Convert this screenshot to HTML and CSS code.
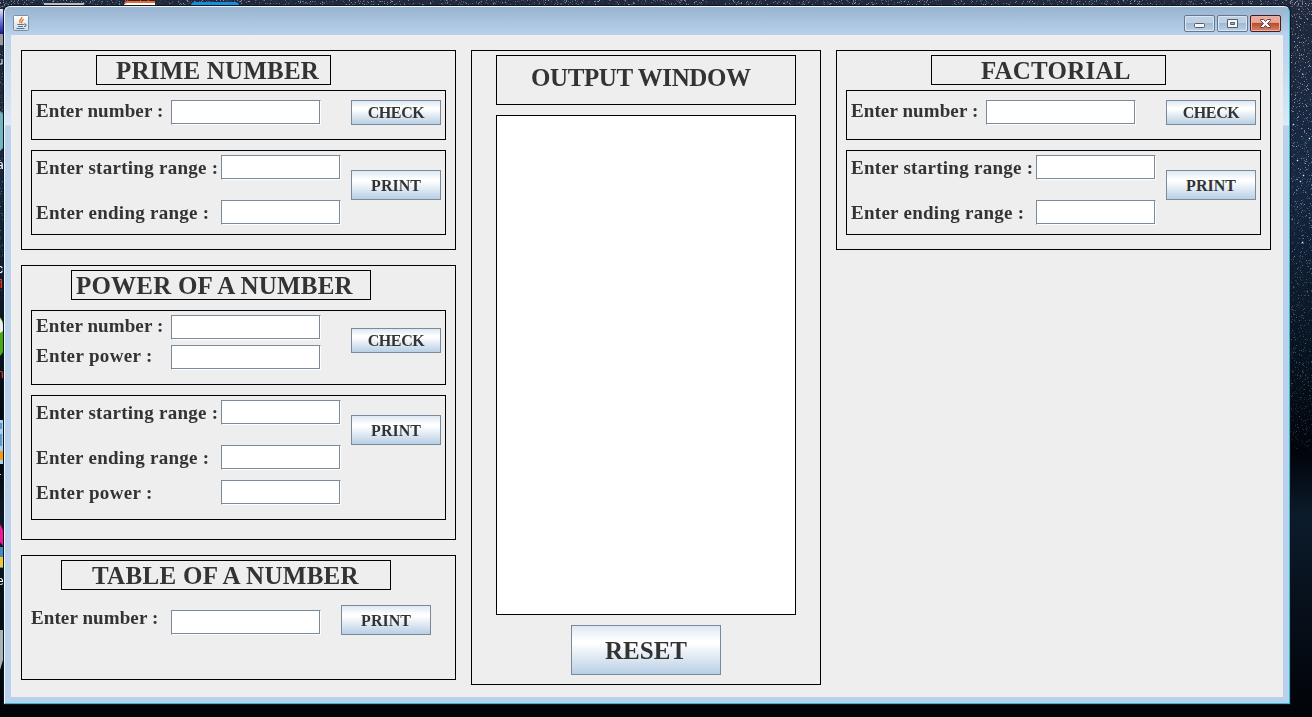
FILE: index.html
```html
<!DOCTYPE html>
<html lang="en">
<head>
<meta charset="utf-8">
<title>Number Tools</title>
<link rel="stylesheet" href="styles.css">
</head>
<body>
<canvas class="stars" width="1312" height="717"></canvas>
<svg class="desktop-icons" width="240" height="717" viewBox="0 0 240 717">
  <defs><linearGradient id="blue" x2="0" y2="1"><stop stop-color="#e5e8fa"/><stop offset=".4" stop-color="#7b8be6"/><stop offset="1" stop-color="#1414a0"/></linearGradient></defs>
  <path d="M44 3h40v3H44z" fill="#bdbdbd"/><path d="M123 6l3-4h29v4z" fill="#fff"/><path d="M125 3q1-1 3-1h27" stroke="#f36b21" stroke-width="2" fill="none"/><path d="M191 6q0-4 4-4h40q4 0 4 4z" fill="#168de2"/>
  <path d="M0 9h3v25H0z" fill="url(#blue)"/><path d="M0 34h3v11H0z" fill="#999"/><path d="M0 64h2v-5" stroke="#fff" fill="none"/>
  <path d="M0 111l3 3v34l-3 3z" fill="#72b5bd"/>
  <path d="M0 317l4 6v28l-4 5z" fill="#4ba916"/><path d="M0 318q4 5 3 13l-3 2z" fill="#eee"/>
  <path d="M0 420h3v44H0z" fill="#a9d2ee"/><path d="M0 423h2v6H0zM0 434h2v12H0z" fill="#5d9bcb"/><path d="M0 451h3v9H0z" fill="#f49a15"/>
  <path d="M0 524q6 9 3 22l-3-4z" fill="#f31598"/><path d="M0 547h3v21H0z" fill="#3e8ac1"/><path d="M0 557h3v10H0z" fill="#f2c637"/>
  <path d="M0 630h3v30l-3 10z" fill="#aab3b8"/>
  <g class="desktop-label"><text x="-3" y="169">a</text><text x="-3" y="273">c</text><text x="-4" y="288" class="alert">d</text><text x="-3" y="378" class="alert">n</text><text x="-3" y="481">r</text><text x="-3" y="585">e</text></g>
</svg>
<div class="window">
  <header class="titlebar">
    <svg class="java" width="16" height="16" viewBox="0 0 16 16">
      <defs><linearGradient id="tile" x2="0" y2="1"><stop stop-color="#fff"/><stop offset="1" stop-color="#d6dce1"/></linearGradient></defs>
      <rect x=".5" y=".5" width="15" height="15" rx="1" fill="url(#tile)" stroke="#7890a5"/>
      <path d="M8.800 1.800C10 3.500 5 5 7.300 8M10.800 4.300C8 5.300 9.700 6.500 8.300 8.300" fill="none" stroke="#e77b26" stroke-width="1.3"/>
      <path d="M4.300 9.500h6.500M5 11.500h5M3.500 13.500h8M11 9c3-.5 2.300 2.500 0 2.500" fill="none" stroke="#4d7899" stroke-width="1.100"/>
    </svg>
    <div class="controls">
      <span class="control"><svg width="31" height="17" viewBox="0 0 31 17"><rect x="10.500" y="8.500" width="10" height="4" rx="1" fill="#f7f7f7" stroke="#535e6c"/></svg></span>
      <span class="control"><svg width="31" height="17" viewBox="0 0 31 17"><path fill-rule="evenodd" d="M10.500 4.500h10v8h-10zM13.500 7.500h4v2h-4z" fill="#f7f7f7" stroke="#535e6c"/></svg></span>
      <span class="control close"><svg width="31" height="17" viewBox="0 0 31 17"><path d="M10.500 4.500h3l2 2 2-2h3v1l-3 3 3 3v1h-3l-2-2-2 2h-3v-1l3-3-3-3z" fill="#fff" stroke="#59434c"/></svg></span>
    </div>
  </header>
  <main class="client">
    <div class="column">
      <section class="card prime">
        <h2 class="title">PRIME NUMBER</h2>
        <div class="group single"><div class="fields"><label class="row">Enter number :<input></label></div><button class="btn low">CHECK</button></div>
        <div class="group range"><div class="fields"><label class="row">Enter starting range :<input></label><label class="row">Enter ending range :<input></label></div><button class="btn">PRINT</button></div>
      </section>
      <section class="card power">
        <h2 class="title">POWER OF A NUMBER</h2>
        <div class="group double"><div class="fields"><label class="row">Enter number :<input></label><label class="row exponent">Enter power :<input></label></div><button class="btn low">CHECK</button></div>
        <div class="group range triple"><div class="fields"><label class="row">Enter starting range :<input></label><label class="row">Enter ending range :<input></label><label class="row exponent last">Enter power :<input></label></div><button class="btn">PRINT</button></div>
      </section>
      <section class="card table">
        <h2 class="title">TABLE OF A NUMBER</h2>
        <div class="group plain"><div class="fields"><label class="row">Enter number :<input></label></div><button class="btn">PRINT</button></div>
      </section>
    </div>
    <section class="card output">
      <h2 class="title">OUTPUT WINDOW</h2>
      <div class="result"></div>
      <button class="btn reset">RESET</button>
    </section>
    <div class="column">
      <section class="card prime factorial">
        <h2 class="title">FACTORIAL</h2>
        <div class="group single"><div class="fields"><label class="row">Enter number :<input></label></div><button class="btn low">CHECK</button></div>
        <div class="group range"><div class="fields"><label class="row">Enter starting range :<input></label><label class="row">Enter ending range :<input></label></div><button class="btn">PRINT</button></div>
      </section>
    </div>
  </main>
</div>
<script src="stars.js"></script>
</body>
</html>
```
FILE: styles.css
```css
* { box-sizing: border-box; }
body { margin: 0; width: 1312px; height: 717px; overflow: hidden; background: #030912; font-family: "Liberation Serif", "Times New Roman", serif; font-weight: bold; color: #333; }
.stars, .desktop-icons { position: absolute; left: 0; top: 0; }
.desktop-label { font: 12px "Liberation Sans", sans-serif; fill: #fff; }
.alert { fill: #f53a20; }
.window { position: relative; width: 1286px; height: 698px; margin: 6px 0 0 4px; padding: 0 6px 6px; border: 1px solid #edf6fb; border-right-color: #32bad5; border-bottom-color: #32bad5; border-radius: 6px 6px 0 0; background: linear-gradient(#99b4d1 0, #b9d1ea 28px, #d3e3f3 100px, #dce9f6 118px, #b9d1ea 119px); box-shadow: 0 0 0 1px #10151b; }
.titlebar { display: flex; justify-content: space-between; height: 28px; padding: 8px 2px 0 2px; }
.java { display: block; }
.controls { display: flex; gap: 2px; }
.control { width: 31px; height: 17px; border: 1px solid #66788d; border-radius: 2px; box-shadow: inset 0 0 0 1px #d9e6f3; background: linear-gradient(#bdd0e4 0 45%, #9eb8d3 46%, #bcd1e5); }
.control svg { display: block; margin: -1px; }
.close { border-color: #4b1820; background: linear-gradient(#e6a99b 0 43%, #bd4527 46%, #d58768); box-shadow: inset 0 0 0 1px #e8b2a4; }
.client { display: flex; gap: 15px; width: 1272px; height: 662px; padding: 15px 0 0 10px; background: #eee; }
.column { width: 435px; display: flex; flex-direction: column; gap: 15px; }
.card { border: 1px solid #000; padding: 4px 9px; }
.title { margin: 0; border: 1px solid #000; height: 30px; line-height: 29px; font-size: 25px; letter-spacing: .2px; white-space: nowrap; }
.prime { height: 200px; }
.prime .title { width: 235px; margin-left: 65px; padding-left: 19px; }
.factorial .title { width: 235px; margin-left: 85px; padding-left: 49px; }
.power { height: 275px; }
.power .title { width: 300px; margin-left: 40px; padding-left: 4px; }
.table { height: 125px; }
.table .title { width: 330px; margin-left: 30px; padding-left: 30px; letter-spacing: .3px; }
.group { display: flex; justify-content: space-between; align-items: flex-start; border: 1px solid #000; width: 415px; padding: 0 4px; }
.single { height: 50px; margin-top: 5px; padding-top: 9px; }
.range { height: 85px; margin-top: 10px; padding-top: 4px; }
.double { height: 75px; margin-top: 10px; padding-top: 4px; }
.triple { height: 125px; }
.fields { display: flex; flex-direction: column; gap: 5px; }
.range .fields { gap: 20px; }
.row { display: grid; grid-template-columns: 135px 150px; height: 25px; line-height: 22px; font-size: 19px; letter-spacing: .1px; white-space: nowrap; }
.range .row { grid-template-columns: 185px 120px; line-height: 26px; letter-spacing: .27px; }
.fields .exponent { letter-spacing: .35px; }
.range .last { margin-top: -10px; }
input { appearance: none; width: 100%; height: 25px; padding: 0; border: 1px solid #7a8a99; border-right-color: #fff; border-bottom-color: #fff; border-radius: 0; background: #fff; box-shadow: inset -1px -1px #7a8a99; }
.btn { width: 90px; height: 30px; padding: 1px 0 0; border: 1px solid #7a8a99; background: linear-gradient(#dde8f3, #fff 30%, #fff 36%, #b8cfe5); color: #333; font: bold 16px "Liberation Serif", "Times New Roman", serif; letter-spacing: 0; }
.low { height: 25px; letter-spacing: -.4px; }
.range .btn { margin-top: 15px; }
.double .btn { margin-top: 13px; }
.plain { border: 0; width: 400px; margin-top: 15px; padding: 0; }
.plain .fields { padding-top: 5px; }
.plain .row { grid-template-columns: 140px 150px; line-height: 15px; }
.output { width: 350px; height: 635px; padding: 4px 24px; }
.output .title { height: 50px; line-height: 44px; padding-left: 34px; letter-spacing: -.4px; }
.result { height: 500px; margin: 10px 0; border: 1px solid #000; background: #fff; }
.reset { display: block; width: 150px; height: 50px; margin-left: 75px; padding-top: 2px; font-size: 25px; }
```
FILE: stars.js
```js
const canvas = document.querySelector('.stars');
const ctx = canvas.getContext('2d');
const sky = ctx.createLinearGradient(0, 0, 0, 717);
sky.addColorStop(0, '#20283c');
sky.addColorStop(.25, '#162840');
sky.addColorStop(.5, '#06121f');
sky.addColorStop(.63, '#01040a');
sky.addColorStop(.72, '#0c1b2b');
sky.addColorStop(1, '#010307');
ctx.fillStyle = sky;
ctx.fillRect(0, 0, 1312, 717);
let seed = 37;
const random = () => (seed = (seed * 16807) % 2147483647) / 2147483647;
const star = (x, y, fade) => {
  ctx.fillStyle = `rgba(${120 + random() * 80},${145 + random() * 60},200,${Math.pow(random(), 5) * fade})`;
  ctx.fillRect(Math.floor(x), Math.floor(y), 1, 1);
};
for (let i = 0; i < 5500; i++) star(random() * 1312, random() * 7, .8);
for (let i = 0; i < 4000; i++) { const y = random() * 450; star(1290 + random() * 22, y, 1 - y / 600); }
for (let i = 0; i < 450; i++) star(random() * 4, random() * 300, .6);
for (const [x, y] of [[1303, 175], [1300, 181], [1302, 242], [1309, 138], [1293, 124], [1297, 160]]) {
  ctx.fillStyle = '#355684';
  ctx.fillRect(x - 1, y, 3, 1);
  ctx.fillRect(x, y - 1, 1, 3);
  ctx.fillStyle = '#dce9ff';
  ctx.fillRect(x, y, 1, 1);
}
```
